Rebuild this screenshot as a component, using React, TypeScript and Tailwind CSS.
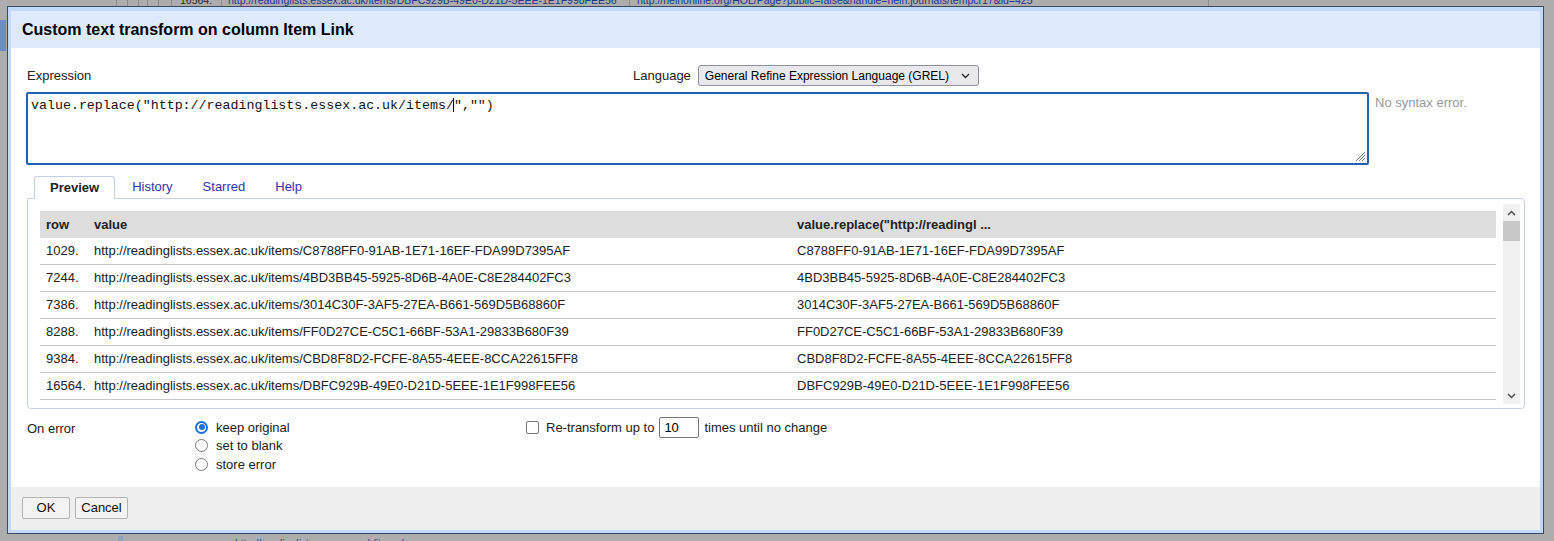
import React from 'react';

const rows = [
  ['1029.', 'C8788FF0-91AB-1E71-16EF-FDA99D7395AF'],
  ['7244.', '4BD3BB45-5925-8D6B-4A0E-C8E284402FC3'],
  ['7386.', '3014C30F-3AF5-27EA-B661-569D5B68860F'],
  ['8288.', 'FF0D27CE-C5C1-66BF-53A1-29833B680F39'],
  ['9384.', 'CBD8F8D2-FCFE-8A55-4EEE-8CCA22615FF8'],
  ['16564.', 'DBFC929B-49E0-D21D-5EEE-1E1F998FEE56'],
];

function Radio({ checked, label }: { checked?: boolean; label: string }) {
  return (
    <div className="flex items-center h-[18.5px]">
      {checked ? (
        <span className="w-[13px] h-[13px] rounded-full border-2 border-[#1a6fe0] flex items-center justify-center">
          <span className="w-[6px] h-[6px] rounded-full bg-[#1a6fe0]" />
        </span>
      ) : (
        <span className="w-[13px] h-[13px] rounded-full border-[1.5px] border-[#7a7a7a] bg-white" />
      )}
      <span className="ml-[8px] text-[#222]">{label}</span>
    </div>
  );
}

export default function App() {
  return (
    <div className="relative w-[1554px] h-[541px] overflow-hidden bg-[#adadad] text-[13px] font-['Liberation_Sans',Arial,sans-serif]">
      {/* page behind the dialog */}
      <div className="flex h-[14px] -mt-[7px] text-[10.5px] leading-[14px] text-[#2a2a2a]">
        <div className="w-[117px] border-r border-[#8f8f8f]" />
        <div className="w-[55px] flex gap-[8px] pl-[10px] items-end border-r border-[#8f8f8f]">
          <span className="w-[12px] h-[12px] border border-[#8a8a8a]" />
          <span className="w-[12px] h-[12px] border border-[#8a8a8a]" />
        </div>
        <div className="w-[50px] pl-[8px] border-r border-[#8f8f8f] whitespace-nowrap overflow-hidden">16564.</div>
        <div className="w-[408px] pl-[6px] text-[#23378a] border-r border-[#8f8f8f] whitespace-nowrap overflow-hidden">
          http://readinglists.essex.ac.uk/items/DBFC929B-49E0-D21D-5EEE-1E1F998FEE56
        </div>
        <div className="w-[579px] pl-[7px] text-[#23378a] border-r border-[#8f8f8f] whitespace-nowrap overflow-hidden">
          http://heinonline.org/HOL/Page?public=false&amp;handle=hein.journals/tempcr17&amp;id=425
        </div>
      </div>
      <div className="absolute left-0 top-[20px] w-[6px] h-[31px] bg-[#6f8dc2]" />
      <div className="absolute left-0 top-[536px] flex h-[14px] text-[10.5px] leading-[14px] text-[#23378a]">
        <div className="w-[118px]" />
        <div className="w-[5px] bg-[#8ea3c8]" />
        <div className="w-[112px]" />
        <div className="whitespace-nowrap">http://readinglists.essex.ac.uk/items/</div>
      </div>

      {/* dialog */}
      <div className="absolute left-[7px] top-[6px] w-[1537px] h-[528px] border border-[#3b4a63] bg-[#c3d9f9] pl-[3px] pr-[3px] pt-[4px] pb-[3px] flex flex-col">
        <div className="h-[37px] bg-[#dee9fb] pl-[11px] flex items-center text-[16px] font-bold text-black">
          Custom text transform on column Item Link
        </div>

        <div className="flex-1 bg-white pl-[15px] pt-[17px]">
          <div className="flex items-center h-[21px]">
            <div className="w-[607px] pl-[1px] text-[#222]">Expression</div>
            <div className="text-[#222]">Language</div>
            <div className="ml-[7px] w-[281px] h-[21px] border border-[#8f8f9d] rounded-[3px] bg-[#e9e9ed] flex items-center pl-[6px] pr-[8px] justify-between text-black text-[12px] whitespace-nowrap">
              <span>General Refine Expression Language (GREL)</span>
              <svg width="9" height="6" viewBox="0 0 9 6">
                <polyline points="1,1 4.5,4.5 8,1" fill="none" stroke="#222" strokeWidth="1.3" />
              </svg>
            </div>
          </div>

          <div className="flex mt-[6px]">
            <div className="relative w-[1343px] h-[73px] border-2 border-[#2261b2] rounded-[2px] pl-[3px] pt-[2px] font-['Liberation_Mono','Courier_New',monospace] text-[13.3px] text-[#111] whitespace-pre">
              value.replace("http://readinglists.essex.ac.uk/items/<span className="inline-block w-[1px] h-[14px] bg-black align-middle -mx-[0.5px]" />","")
              <svg className="absolute right-[1px] bottom-[1px]" width="12" height="12" viewBox="0 0 12 12">
                <line x1="11" y1="2" x2="2" y2="11" stroke="#777" strokeWidth="1" />
                <line x1="11" y1="5" x2="5" y2="11" stroke="#777" strokeWidth="1" />
                <line x1="11" y1="8" x2="8" y2="11" stroke="#777" strokeWidth="1" />
              </svg>
            </div>
            <div className="ml-[6px] pt-[1px] text-[#999]">No syntax error.</div>
          </div>

          <div className="ml-[1px] w-[1498px] mt-[11px]">
            <div className="flex pl-[7px] h-[22px]">
              <div className="relative z-10 h-[23px] px-[15px] border border-b-0 border-[#c3d2e9] rounded-t-[3px] bg-white flex items-center font-bold text-[#222]">
                Preview
              </div>
              <div className="h-[22px] ml-[2px] px-[15px] flex items-center text-[#3333aa]">History</div>
              <div className="h-[22px] px-[15px] flex items-center text-[#3333aa]">Starred</div>
              <div className="h-[22px] px-[15px] flex items-center text-[#3333aa]">Help</div>
            </div>
            <div className="h-[211px] border border-[#c3d2e9] rounded-b-[4px] rounded-tr-[4px] pt-[5px] pr-[4px] pb-[4px] pl-[4px]">
              <div className="flex h-[200px]">
                <div className="flex-1 h-[200px] overflow-hidden pl-[8px] pr-[7px] pt-[7px]">
                  <div className="grid grid-cols-[48px_703px_1fr] h-[27px] bg-[#dddddd] font-bold text-[#222] items-center">
                    <div className="pl-[6px]">row</div>
                    <div className="pl-[6px]">value</div>
                    <div className="pl-[6px]">value.replace("http://readingl ...</div>
                  </div>
                  {rows.map(([n, id]) => (
                    <div key={n} className="grid grid-cols-[48px_703px_1fr] h-[27px] border-b border-[#c9c9c9] items-center text-[#222]">
                      <div className="pl-[6px]">{n}</div>
                      <div className="pl-[6px]">http://readinglists.essex.ac.uk/items/{id}</div>
                      <div className="pl-[6px]">{id}</div>
                    </div>
                  ))}
                </div>
                <div className="w-[17px] h-[200px] bg-[#f1f1f1] flex flex-col items-center">
                  <div className="h-[17px] flex items-center justify-center">
                    <svg width="9" height="6" viewBox="0 0 9 6">
                      <polyline points="1,5 4.5,1.5 8,5" fill="none" stroke="#505050" strokeWidth="1.5" />
                    </svg>
                  </div>
                  <div className="w-[17px] h-[20px] bg-[#c8c8c8]" />
                  <div className="flex-1" />
                  <div className="h-[17px] flex items-center justify-center">
                    <svg width="9" height="6" viewBox="0 0 9 6">
                      <polyline points="1,1 4.5,4.5 8,1" fill="none" stroke="#505050" strokeWidth="1.5" />
                    </svg>
                  </div>
                </div>
              </div>
            </div>
          </div>

          <div className="flex mt-[8px]">
            <div className="w-[169px] pl-[1px] pt-[2px] text-[#222]">On error</div>
            <div className="w-[331px] flex flex-col pt-[1px]">
              <Radio checked label="keep original" />
              <Radio label="set to blank" />
              <Radio label="store error" />
            </div>
            <div className="flex items-center h-[21px] text-[#222]">
              <span className="w-[13px] h-[13px] border border-[#767676] rounded-[2px] bg-white" />
              <span className="ml-[7px]">Re-transform up to</span>
              <div className="ml-[5px] w-[40px] h-[21px] border border-[#767676] rounded-[2px] pl-[4px] flex items-center text-black">10</div>
              <span className="ml-[5px]">times until no change</span>
            </div>
          </div>
        </div>

        <div className="h-[43px] bg-[#eeeeee] pl-[11px] pt-[10px] flex items-start">
          <button className="w-[48px] h-[22px] border border-[#b3b3b3] rounded-[2px] bg-[#f3f3f3] text-[#111]">OK</button>
          <button className="ml-[5px] w-[53px] h-[22px] border border-[#b3b3b3] rounded-[2px] bg-[#f3f3f3] text-[#111]">Cancel</button>
        </div>
      </div>
    </div>
  );
}
